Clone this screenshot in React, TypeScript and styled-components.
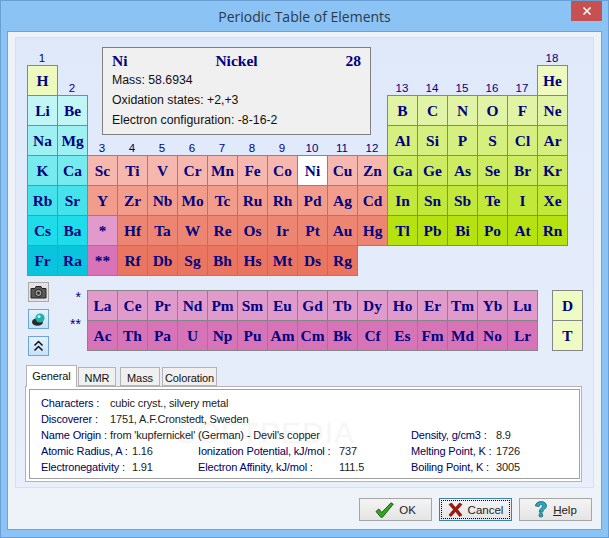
import styled, { createGlobalStyle } from "styled-components";

const GlobalStyle = createGlobalStyle`
  html, body {
    margin: 0;
    padding: 0;
    background: #8cc3f5;
  }
`;

const Window = styled.div`
  box-sizing: border-box;
  width: 609px;
  height: 538px;
  display: flex;
  flex-direction: column;
  padding: 0 6px 7px 6px;
  background: #8cc3f5;
  border: 1px solid #6a9fd4;
  font-family: "Liberation Sans", Arial, sans-serif;
  overflow: hidden;
`;

const TitleBar = styled.div`
  position: relative;
  height: 30px;
  flex: none;
  display: flex;
  align-items: center;
  justify-content: center;
  font-family: "Open Sans", "Noto Sans", sans-serif;
  font-size: 14px;
  color: #2b3a4a;
`;

const CloseBox = styled.div`
  position: absolute;
  top: 0;
  right: 0;
  width: 31px;
  height: 20px;
  background: #c75050;
  display: flex;
  align-items: center;
  justify-content: center;
`;

const Client = styled.div`
  flex: 1;
  box-sizing: border-box;
  padding: 5px 7px 0 7px;
  background: #eef3fa;
  border: 1px solid #6fa3d6;
`;

const GroupBox = styled.div`
  box-sizing: border-box;
  height: 451px;
  padding: 7px 10px 0 11px;
  background: linear-gradient(#dfe9fa, #e8eefa);
  border: 1px solid #d9e0e8;
`;

const Table = styled.div`
  display: grid;
  grid-template-columns: repeat(18, 30px);
  grid-template-rows: 20px repeat(7, 30px);
`;

const GroupNo = styled.div<{ $col: number; $row: number }>`
  grid-column: ${(p) => p.$col};
  grid-row: ${(p) => p.$row};
  align-self: end;
  margin-bottom: -1px;
  text-align: center;
  font-size: 11.5px;
  line-height: 15px;
  color: #000080;
`;

const Cell = styled.div<{ $bg: string; $col?: number; $row?: number }>`
  box-sizing: border-box;
  ${(p) => (p.$col ? `grid-column: ${p.$col};` : "")}
  ${(p) => (p.$row ? `grid-row: ${p.$row};` : "")}
  width: 31px;
  height: 31px;
  margin-right: -1px;
  margin-bottom: -1px;
  background: ${(p) => p.$bg};
  border: 1px solid #86868a;
  display: flex;
  align-items: center;
  justify-content: center;
  font-family: "Liberation Serif", "Times New Roman", serif;
  font-weight: bold;
  font-size: 15.4px;
  color: #000080;
`;

const InfoBox = styled.div`
  grid-column: 3 / 13;
  grid-row: 1 / 5;
  box-sizing: border-box;
  margin: 2px 16px 20px 15px;
  padding: 4px 9px 0 9px;
  background: #f0f0f0;
  border: 1px solid #808080;
  font-size: 12.3px;
  color: #101010;
`;

const InfoHead = styled.div`
  display: flex;
  justify-content: space-between;
  font-family: "Liberation Serif", "Times New Roman", serif;
  font-weight: bold;
  font-size: 15.5px;
  line-height: 18px;
  color: #000080;
`;

const InfoLine = styled.div`
  line-height: 20px;
`;

const LowerRow = styled.div`
  display: flex;
  margin-top: 7px;
`;

const ToolColumn = styled.div`
  width: 34px;
  display: flex;
  flex-direction: column;
  gap: 7px;
`;

const ToolButton = styled.div<{ $plain?: boolean }>`
  box-sizing: border-box;
  width: 21px;
  height: 20px;
  display: flex;
  align-items: center;
  justify-content: center;
  margin-left: 1px;
  border: 1px solid ${(p) => (p.$plain ? "#a9a9a9" : "#6ea5d8")};
  background: ${(p) => (p.$plain ? "#e3e3e3" : "linear-gradient(#e4f2fd, #c4e2fb)")};
`;

const Stars = styled.div`
  width: 26px;
  box-sizing: border-box;
  padding: 8px 6px 0 0;
  display: flex;
  flex-direction: column;
  gap: 13px;
  font-size: 14px;
  line-height: 14px;
  color: #000080;
  text-align: right;
`;

const Series = styled.div`
  display: grid;
  grid-template-columns: repeat(15, 30px);
  grid-template-rows: repeat(2, 30px);
  margin-top: 8px;
`;

const Isotopes = styled.div`
  display: grid;
  grid-template-rows: repeat(2, 30px);
  margin: 8px 0 0 15px;
`;

const Tabs = styled.div`
  margin-top: 9px;
  margin-left: -2px;
  width: 557px;
`;

const TabStrip = styled.div`
  display: flex;
  align-items: flex-end;
  height: 21px;
  position: relative;
`;

const Tab = styled.div<{ $active?: boolean; $w: number; $gap?: number }>`
  box-sizing: border-box;
  width: ${(p) => p.$w}px;
  margin-left: ${(p) => p.$gap ?? 0}px;
  height: ${(p) => (p.$active ? 22 : 19)}px;
  margin-bottom: ${(p) => (p.$active ? -1 : 0)}px;
  position: relative;
  z-index: ${(p) => (p.$active ? 1 : 0)};
  padding-top: 3px;
  text-align: center;
  font-size: 11px;
  line-height: 14px;
  letter-spacing: -0.1px;
  color: #111;
  background: ${(p) => (p.$active ? "#fff" : "#f0f0f0")};
  border: 1px solid #b4b4b4;
  border-bottom: ${(p) => (p.$active ? "none" : "1px solid #b4b4b4")};
`;

const TabPanel = styled.div`
  box-sizing: border-box;
  height: 96px;
  padding: 2px 1px 2px 3px;
  background: #fff;
  border: 1px solid #b4b4b4;
`;

const Sheet = styled.div`
  position: relative;
  box-sizing: border-box;
  height: 100%;
  padding: 5px 0 0 11px;
  border: 1px solid #a0a0a0;
  font-size: 11px;
  line-height: 16px;
  letter-spacing: -0.15px;
  color: #222;
  overflow: hidden;
`;

const Watermark = styled.div`
  position: absolute;
  left: 146px;
  top: 28px;
  font-size: 30px;
  line-height: 30px;
  letter-spacing: 1px;
  color: #f6f6f6;
  white-space: nowrap;
`;

const FactGrid = styled.div`
  position: relative;
  display: grid;
  grid-template-columns: 69px 22px 66px 141px 72px 85px 1fr;
  grid-auto-rows: 16px;
`;

const Label = styled.div`
  color: #000060;
  white-space: nowrap;
`;

const Value = styled.div`
  white-space: nowrap;
`;

const LongValue = styled(Value)`
  grid-column: 2 / 6;
`;

const WideLabel = styled(Label)`
  grid-column: 1 / 3;
`;

const FullRow = styled(Value)`
  grid-column: 2 / -1;
`;

const MidLabel = styled(Label)`
  grid-column: 4;
`;

const EndLabel = styled(Label)`
  grid-column: 6;
`;

const ButtonRow = styled.div`
  display: flex;
  justify-content: flex-end;
  gap: 7px;
  margin: 10px 2px 0 0;
`;

const DialogButton = styled.div<{ $focus?: boolean }>`
  box-sizing: border-box;
  width: 73px;
  height: 23px;
  display: flex;
  align-items: center;
  justify-content: center;
  gap: 5px;
  font-size: 11.5px;
  color: #222;
  background: linear-gradient(#f4f4f4, #e4e4e4);
  border: 1px solid ${(p) => (p.$focus ? "#3c7fb1" : "#a6a6a6")};
  ${(p) => (p.$focus ? "outline: 1px dotted #000; outline-offset: -3px;" : "")}
`;

const Underlined = styled.span`
  text-decoration: underline;
`;

const rowColors = {
  s: ["#eef9bd", "#c0f6f6", "#9ef0f2", "#75ebf0", "#46e2ec", "#1fdcea", "#0ac4de"],
  d: ["", "", "", "#f6b8ae", "#f29d8c", "#ec8672", "#ea7560"],
  p: ["#eefac0", "#e1f4a5", "#d5f07f", "#cdec62", "#c2e83a", "#b6e210"],
};

const sBlock = ["H", "Li Be", "Na Mg", "K Ca", "Rb Sr", "Cs Ba", "Fr Ra"].map((r) => r.split(" "));
const dBlock = [
  "Sc Ti V Cr Mn Fe Co Ni Cu Zn",
  "Y Zr Nb Mo Tc Ru Rh Pd Ag Cd",
  "* Hf Ta W Re Os Ir Pt Au Hg",
  "** Rf Db Sg Bh Hs Mt Ds Rg",
].map((r) => r.split(" "));
const pBlock = [
  "B C N O F Ne",
  "Al Si P S Cl Ar",
  "Ga Ge As Se Br Kr",
  "In Sn Sb Te I Xe",
  "Tl Pb Bi Po At Rn",
].map((r) => r.split(" "));
const lanthanides = "La Ce Pr Nd Pm Sm Eu Gd Tb Dy Ho Er Tm Yb Lu".split(" ");
const actinides = "Ac Th Pa U Np Pu Am Cm Bk Cf Es Fm Md No Lr".split(" ");

const groupNumbers = [
  [1, 1], [2, 2], [3, 4], [4, 4], [5, 4], [6, 4], [7, 4], [8, 4], [9, 4], [10, 4],
  [11, 4], [12, 4], [13, 2], [14, 2], [15, 2], [16, 2], [17, 2], [18, 1],
];

function dColor(sym: string, row: number) {
  if (sym === "Ni") return "#ffffff";
  if (sym === "*") return "#e19acb";
  if (sym === "**") return "#d873b8";
  return rowColors.d[row + 3];
}

function App() {
  return (
    <>
      <GlobalStyle />
      <Window>
        <TitleBar>
          Periodic Table of Elements
          <CloseBox>
            <svg width="10" height="10" viewBox="0 0 10 10">
              <path d="M1.5 1.5 L8.5 8.5 M8.5 1.5 L1.5 8.5" stroke="#fff" strokeWidth="1.6" />
            </svg>
          </CloseBox>
        </TitleBar>
        <Client>
          <GroupBox>
            <Table>
              {groupNumbers.map(([n, row]) => (
                <GroupNo key={n} $col={n} $row={row}>
                  {n}
                </GroupNo>
              ))}
              <InfoBox>
                <InfoHead>
                  <span>Ni</span>
                  <span>Nickel</span>
                  <span>28</span>
                </InfoHead>
                <InfoLine>Mass: 58.6934</InfoLine>
                <InfoLine>Oxidation states: +2,+3</InfoLine>
                <InfoLine>Electron configuration: -8-16-2</InfoLine>
              </InfoBox>
              {sBlock.map((syms, r) =>
                syms.map((s, c) => (
                  <Cell key={s} $col={c + 1} $row={r + 2} $bg={rowColors.s[r]}>
                    {s}
                  </Cell>
                ))
              )}
              {dBlock.map((syms, r) =>
                syms.map((s, c) => (
                  <Cell key={s} $col={c + 3} $row={r + 5} $bg={dColor(s, r)}>
                    {s}
                  </Cell>
                ))
              )}
              {pBlock.map((syms, r) =>
                syms.map((s, c) => (
                  <Cell key={s} $col={c + 13} $row={r + 3} $bg={rowColors.p[r + 1]}>
                    {s}
                  </Cell>
                ))
              )}
              <Cell $col={18} $row={2} $bg={rowColors.p[0]}>
                He
              </Cell>
            </Table>
            <LowerRow>
              <ToolColumn>
                <ToolButton $plain>
                  <svg width="17" height="14" viewBox="0 0 17 14">
                    <path d="M1 3.5h4l1-2h5l1 2h4v9.5H1z" fill="#5a5a5a" stroke="#222" />
                    <circle cx="8.5" cy="8" r="3.6" fill="#9a9a9a" stroke="#222" />
                    <circle cx="8.5" cy="8" r="1.6" fill="#333" />
                  </svg>
                </ToolButton>
                <ToolButton>
                  <svg width="16" height="15" viewBox="0 0 16 15">
                    <ellipse cx="6.5" cy="10" rx="5.5" ry="3.8" fill="#2a2a2a" />
                    <circle cx="9" cy="6" r="4.6" fill="#22b0ac" />
                    <circle cx="8" cy="4.5" r="1.6" fill="#bff2ee" />
                  </svg>
                </ToolButton>
                <ToolButton>
                  <svg width="11" height="12" viewBox="0 0 11 12">
                    <path d="M1.5 5.5 5.5 1.5 9.5 5.5 M1.5 10.5 5.5 6.5 9.5 10.5" fill="none" stroke="#111" strokeWidth="1.5" />
                  </svg>
                </ToolButton>
              </ToolColumn>
              <Stars>
                <div>*</div>
                <div>**</div>
              </Stars>
              <Series>
                {lanthanides.map((s) => (
                  <Cell key={s} $bg="#e09bcb">
                    {s}
                  </Cell>
                ))}
                {actinides.map((s) => (
                  <Cell key={s} $bg="#d774b8">
                    {s}
                  </Cell>
                ))}
              </Series>
              <Isotopes>
                <Cell $bg="#eefbc3">D</Cell>
                <Cell $bg="#eefbc3">T</Cell>
              </Isotopes>
            </LowerRow>
            <Tabs>
              <TabStrip>
                <Tab $active $w={51} $gap={1}>
                  General
                </Tab>
                <Tab $w={38} $gap={1}>
                  NMR
                </Tab>
                <Tab $w={40} $gap={4}>
                  Mass
                </Tab>
                <Tab $w={55} $gap={2}>
                  Coloration
                </Tab>
              </TabStrip>
              <TabPanel>
                <Sheet>
                  <Watermark>SOFTPEDIA</Watermark>
                  <FactGrid>
                    <Label>Characters :</Label>
                    <FullRow>cubic cryst., silvery metal</FullRow>
                    <Label>Discoverer :</Label>
                    <FullRow>1751, A.F.Cronstedt, Sweden</FullRow>
                    <Label>Name Origin :</Label>
                    <LongValue>from 'kupfernickel' (German) - Devil's copper</LongValue>
                    <EndLabel>Density, g/cm3 :</EndLabel>
                    <Value>8.9</Value>
                    <WideLabel>Atomic Radius, A :</WideLabel>
                    <Value>1.16</Value>
                    <MidLabel>Ionization Potential, kJ/mol :</MidLabel>
                    <Value>737</Value>
                    <EndLabel>Melting Point, K :</EndLabel>
                    <Value>1726</Value>
                    <WideLabel>Electronegativity :</WideLabel>
                    <Value>1.91</Value>
                    <MidLabel>Electron Affinity, kJ/mol :</MidLabel>
                    <Value>111.5</Value>
                    <EndLabel>Boiling Point, K :</EndLabel>
                    <Value>3005</Value>
                  </FactGrid>
                </Sheet>
              </TabPanel>
            </Tabs>
          </GroupBox>
          <ButtonRow>
            <DialogButton>
              <svg width="19" height="16" viewBox="0 0 19 16">
                <path d="M1 9.500l2.800-2.500 3 3.500L16 .8l2.200 1.400L7.500 15.200H5.800z" fill="#35a81f" stroke="#0f4f0a" strokeWidth="0.9" />
              </svg>
              OK
            </DialogButton>
            <DialogButton $focus>
              <svg width="15" height="15" viewBox="0 0 15 15">
                <path d="M1 2.500 3.500 1 7.500 5.500 11.500 1 14 2.500 9.500 7.500 14 13 11.500 14.500 7.500 9.500 3 14.500 1 13 5.500 7.500z" fill="#a8150c" stroke="#5f0b05" strokeWidth="0.6" />
              </svg>
              Cancel
            </DialogButton>
            <DialogButton>
              <svg width="14" height="17" viewBox="0 0 14 17">
                <path d="M1.500 5C1.500 2 4.200.6 7.200.6s5.300 1.600 5.300 4.200c0 3.300-3.800 3.400-3.800 6.400H5.200c0-3.900 3.200-4.100 3.200-6.300 0-1-.6-1.500-1.500-1.500S5.200 4.100 5.200 5.500z" fill="#2aa9bd" stroke="#0c4f63" strokeWidth="0.7" />
                <circle cx="6.900" cy="14.200" r="1.900" fill="#2aa9bd" stroke="#0c4f63" strokeWidth="0.7" />
              </svg>
              <span>
                <Underlined>H</Underlined>elp
              </span>
            </DialogButton>
          </ButtonRow>
        </Client>
      </Window>
    </>
  );
}

export default App;
